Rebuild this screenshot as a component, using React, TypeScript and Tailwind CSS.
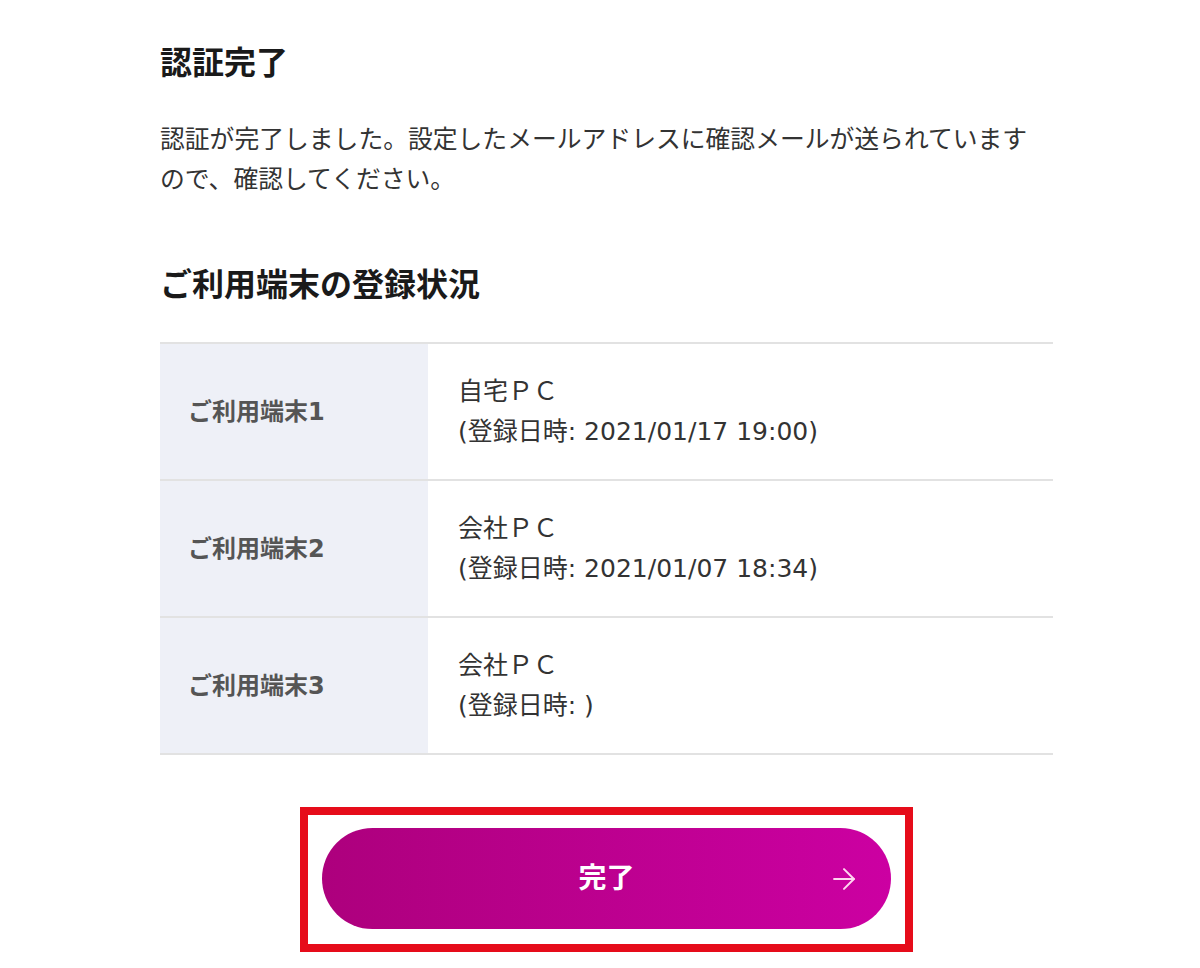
import { ArrowRight } from "lucide-react";

const devices = [
  { label: "ご利用端末1", name: "自宅ＰＣ", date: "(登録日時: 2021/01/17 19:00)" },
  { label: "ご利用端末2", name: "会社ＰＣ", date: "(登録日時: 2021/01/07 18:34)" },
  { label: "ご利用端末3", name: "会社ＰＣ", date: "(登録日時: )" },
];

const font = { fontFamily: '"DejaVu Sans", "Noto Sans CJK JP", sans-serif' };

const App = () => (
  <div className="min-h-screen w-full bg-white" style={font}>
    <div className="ml-[160px] w-[893px] pt-[43px]">
      <h1 className="text-[32px] leading-[40px] font-bold text-[#1a1a1a]">認証完了</h1>

      <p className="mt-[37px] text-[24.8px] leading-[40px] text-[#333]">
        認証が完了しました。設定したメールアドレスに確認メールが送られています
        <br />
        ので、確認してください。
      </p>

      <h2 className="mt-[65px] text-[32px] leading-[40px] font-bold text-[#1a1a1a]">
        ご利用端末の登録状況
      </h2>

      <div className="mt-[37px] border-b-2 border-[#e2e2e2]">
        {devices.map((d) => (
          <div key={d.label} className="flex h-[137px] border-t-2 border-[#e2e2e2]">
            <div className="flex w-[268px] items-center bg-[#eef0f7] pl-[28px] text-[24px] font-bold text-[#555]">
              {d.label}
            </div>
            <div className="flex flex-1 flex-col justify-center pl-[30px] text-[25px] leading-[40px] text-[#333]">
              <span>{d.name}</span>
              <span>{d.date}</span>
            </div>
          </div>
        ))}
      </div>

      <div className="mt-[52px] flex justify-center">
        <div className="border-[8px] border-[#e60c1a] px-[14px] pt-[13px] pb-[15px]">
          <button className="relative flex h-[101px] w-[569px] items-center justify-center rounded-full bg-linear-to-r from-[#ad007d] to-[#cc00a2] text-white">
            <span className="text-[28px] font-bold">完了</span>
            <ArrowRight
              className="absolute right-[30px] top-1/2 -translate-y-1/2 text-[#ffd6f0]"
              size={34}
              strokeWidth={1.4}
            />
          </button>
        </div>
      </div>
    </div>
  </div>
);

export default App;
